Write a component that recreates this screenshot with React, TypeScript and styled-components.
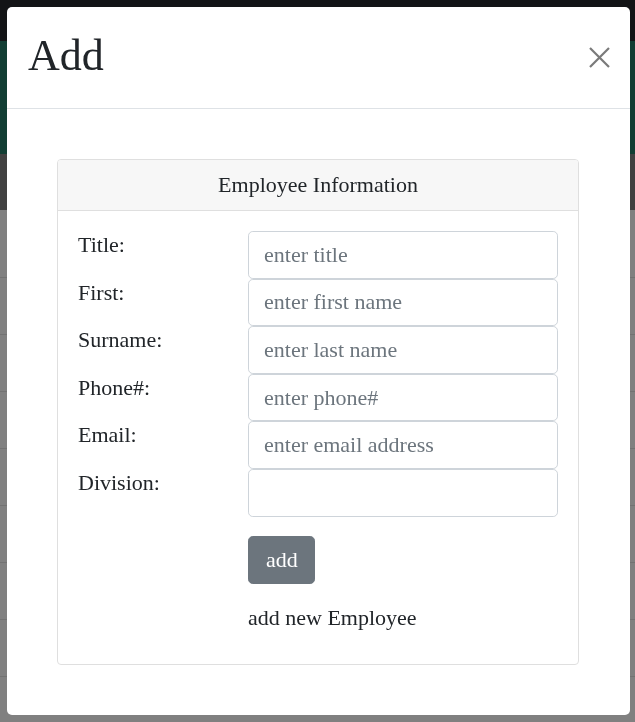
import React from "react";
import styled, { createGlobalStyle } from "styled-components";

const GlobalStyle = createGlobalStyle`
  html, body {
    margin: 0;
    padding: 0;
  }
  body {
    font-family: "Liberation Serif", "Times New Roman", serif;
    color: #212529;
    background: #808080;
  }
`;

const Page = styled.div`
  min-height: 722px;
  display: flex;
  flex-direction: column;
  background: #808080;
`;

const TopBar = styled.div`
  height: 41px;
  background: #131416;
`;

const Banner = styled.div`
  height: 113px;
  background: #123e34;
`;

const NavStrip = styled.div`
  height: 56px;
  background: #414141;
`;

const Row = styled.div<{ tall?: boolean }>`
  height: ${({ tall }) => (tall ? "67px" : "56px")};
  border-bottom: 1px solid #727272;
`;

const Modal = styled.div`
  position: fixed;
  top: 7px;
  left: 7px;
  width: 623px;
  height: 708px;
  box-sizing: border-box;
  background: #fff;
  border-radius: 5px;
  display: flex;
  flex-direction: column;
  overflow: hidden;
`;

const ModalHeader = styled.div`
  display: flex;
  align-items: flex-start;
  justify-content: space-between;
  padding: 16px 20px 19px 21px;
  border-bottom: 1px solid #dee2e6;
`;

const ModalTitle = styled.h1`
  margin: 0;
  font-size: 44px;
  font-weight: 400;
  line-height: 66px;
  color: #212529;
`;

const CloseButton = styled.button`
  margin-top: 23px;
  width: 22px;
  height: 22px;
  padding: 0;
  border: 0;
  background: transparent;
  display: flex;
  align-items: center;
  justify-content: center;
  cursor: pointer;
`;

const ModalBody = styled.div`
  flex: 1;
  padding: 50px 51px 51px 50px;
`;

const Card = styled.div`
  border: 1px solid #dfdfdf;
  border-radius: 4px;
  overflow: hidden;
`;

const CardHeader = styled.div`
  padding: 12px 20px;
  line-height: 26px;
  font-size: 22px;
  text-align: center;
  background: #f7f7f7;
  border-bottom: 1px solid #dfdfdf;
`;

const CardBody = styled.div`
  padding: 20px 20px 30px 20px;
`;

const FormGrid = styled.div`
  display: grid;
  grid-template-columns: 170px 1fr;
  grid-auto-rows: 47.6px;
`;

const Label = styled.label`
  font-size: 22px;
  line-height: 27px;
`;

const Input = styled.input`
  box-sizing: border-box;
  width: 100%;
  height: 47.6px;
  padding: 8px 15px;
  font-family: inherit;
  font-size: 22px;
  color: #495057;
  background: #fff;
  border: 1px solid #ced4da;
  border-radius: 4.8px;
  outline: none;

  &::placeholder {
    color: #6c757d;
  }
`;

const Actions = styled.div`
  margin-left: 170px;
  padding-top: 19px;
`;

const AddButton = styled.button`
  font-family: inherit;
  font-size: 22px;
  line-height: 30px;
  padding: 8px 16px 8px 17px;
  color: #fff;
  background: #6c757d;
  border: 1px solid #6c757d;
  border-radius: 4.8px;
  cursor: pointer;
`;

const Note = styled.p`
  margin: 17px 0 0;
  font-size: 22px;
  line-height: 33px;
`;

const fields = [
  { label: "Title:", placeholder: "enter title" },
  { label: "First:", placeholder: "enter first name" },
  { label: "Surname:", placeholder: "enter last name" },
  { label: "Phone#:", placeholder: "enter phone#" },
  { label: "Email:", placeholder: "enter email address" },
  { label: "Division:", placeholder: "" },
];

export default function App() {
  return (
    <>
      <GlobalStyle />
      <Page>
        <TopBar />
        <Banner />
        <NavStrip />
        <Row tall />
        {Array.from({ length: 8 }).map((_, i) => (
          <Row key={i} />
        ))}
      </Page>
      <Modal>
        <ModalHeader>
          <ModalTitle>Add</ModalTitle>
          <CloseButton aria-label="Close">
            <svg width="21" height="21" viewBox="0 0 21 21">
              <path
                d="M1 1 L20 20 M20 1 L1 20"
                stroke="#7a7a7a"
                strokeWidth="2.2"
                fill="none"
              />
            </svg>
          </CloseButton>
        </ModalHeader>
        <ModalBody>
          <Card>
            <CardHeader>Employee Information</CardHeader>
            <CardBody>
              <FormGrid>
                {fields.map((f) => (
                  <React.Fragment key={f.label}>
                    <Label>{f.label}</Label>
                    <Input placeholder={f.placeholder} />
                  </React.Fragment>
                ))}
              </FormGrid>
              <Actions>
                <AddButton>add</AddButton>
                <Note>add new Employee</Note>
              </Actions>
            </CardBody>
          </Card>
        </ModalBody>
      </Modal>
    </>
  );
}
